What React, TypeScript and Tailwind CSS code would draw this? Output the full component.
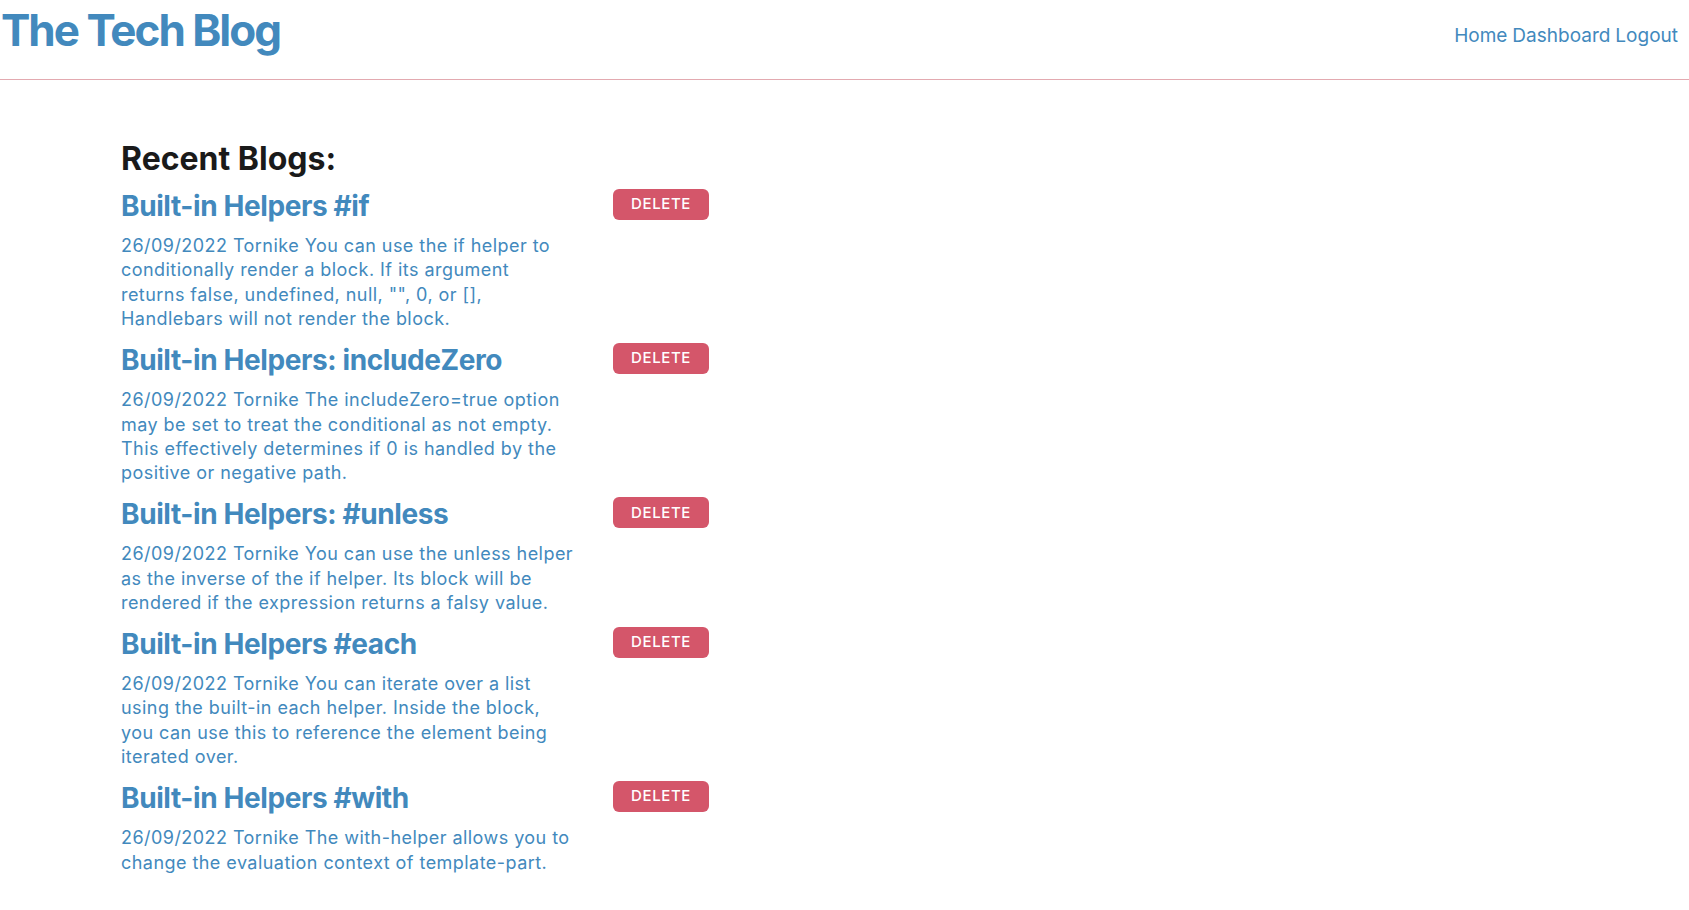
const blogs = [
  {
    title: "Built-in Helpers #if",
    body: 'You can use the if helper to conditionally render a block. If its argument returns false, undefined, null, "", 0, or [], Handlebars will not render the block.',
  },
  {
    title: "Built-in Helpers: includeZero",
    body: "The includeZero=true option may be set to treat the conditional as not empty. This effectively determines if 0 is handled by the positive or negative path.",
  },
  {
    title: "Built-in Helpers: #unless",
    body: "You can use the unless helper as the inverse of the if helper. Its block will be rendered if the expression returns a falsy value.",
  },
  {
    title: "Built-in Helpers #each",
    body: "You can iterate over a list using the built-in each helper. Inside the block, you can use this to reference the element being iterated over.",
  },
  {
    title: "Built-in Helpers #with",
    body: "The with-helper allows you to change the evaluation context of template-part.",
  },
];

export default function App() {
  return (
    <div className="min-h-screen bg-white font-['Inter','Liberation_Sans',sans-serif] text-[#4289bd]">
      <header className="flex h-[80px] items-start justify-between border-b border-[#e3aab0] pl-[1px] pr-[11px]">
        <h1 className="mt-[8px] text-[44px] font-bold leading-[44px] tracking-[-2px]">
          The Tech Blog
        </h1>
        <nav className="mt-[24px] flex gap-[5px] text-[19px] leading-[24px]">
          <a href="#">Home</a>
          <a href="#">Dashboard</a>
          <a href="#">Logout</a>
        </nav>
      </header>

      <main className="px-[121px] pt-[60px]">
        <h2 className="text-[32px] font-bold leading-[38px] text-[#1a1a1a]">Recent Blogs:</h2>
        <div className="mt-[10px] flex w-[588px] flex-col gap-[10.5px]">
          {blogs.map((b) => (
            <article key={b.title} className="flex items-start justify-between">
              <div className="w-[456px]">
                <h3 className="text-[28px] font-bold leading-[36px] tracking-[-0.4px]">{b.title}</h3>
                <p className="mt-[10px] text-[18px] leading-[24.4px] tracking-[0.45px]">
                  26/09/2022 Tornike {b.body}
                </p>
              </div>
              <button className="mt-[1px] h-[31px] w-[96px] rounded-[6px] bg-[#d4566a] text-[15px] font-medium tracking-[0.6px] text-white">
                DELETE
              </button>
            </article>
          ))}
        </div>
      </main>
    </div>
  );
}
